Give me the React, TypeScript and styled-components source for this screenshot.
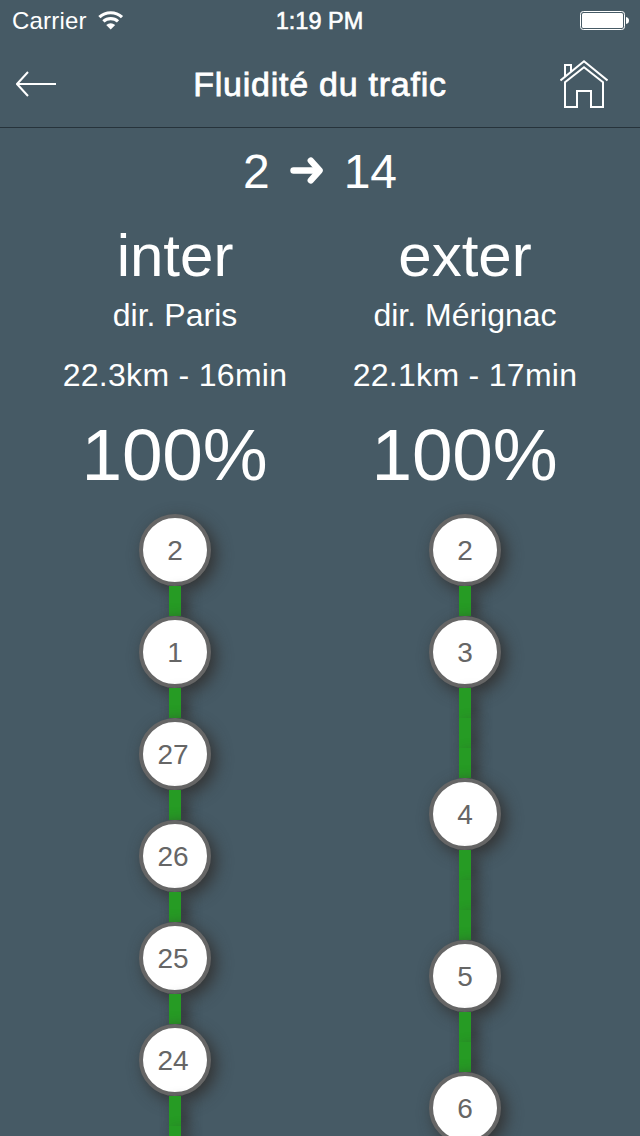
import React from "react";
import styled, { createGlobalStyle } from "styled-components";

const GlobalStyle = createGlobalStyle`
  * { box-sizing: border-box; }
  body { margin: 0; background: #465a65; }
`;

const Screen = styled.div`
  width: 640px;
  height: 1136px;
  overflow: hidden;
  display: flex;
  flex-direction: column;
  background: #465a65;
  color: #fff;
  font-family: "Liberation Sans", Arial, sans-serif;
`;

const StatusBar = styled.div`
  flex: none;
  height: 40px;
  padding: 1px 11px 0 12px;
  display: grid;
  grid-template-columns: 1fr auto 1fr;
  align-items: center;
  font-size: 24px;
  line-height: 39px;
`;

const Carrier = styled.div`
  display: flex;
  align-items: center;
  gap: 11px;
  letter-spacing: 0.2px;
`;

const Clock = styled.div`
  font-size: 23.5px;
  line-height: 37px;
  padding: 2px 2px 0 0;
  -webkit-text-stroke: 0.6px #fff;
`;

const Battery = styled.svg`
  justify-self: end;
`;

const NavBar = styled.header`
  flex: none;
  height: 88px;
  padding: 0 16px;
  display: grid;
  grid-template-columns: 1fr auto 1fr;
  align-items: center;
  border-bottom: 1px solid #26333b;
`;

const Title = styled.h1`
  margin: 0;
  font-size: 34px;
  line-height: 40px;
  font-weight: 400;
  letter-spacing: 0.75px;
  -webkit-text-stroke: 0.8px #fff;
`;

const HomeIcon = styled.svg`
  justify-self: end;
  margin-right: 16px;
`;

const Route = styled.div`
  flex: none;
  height: 86px;
  display: flex;
  align-items: center;
  justify-content: center;
  gap: 20px;
  font-size: 48px;
  line-height: 84px;
`;

const Exit = styled.span`
  padding-top: 2px;
`;

const Columns = styled.main`
  flex: 1;
  min-height: 0;
  padding: 0 30px;
  display: grid;
  grid-template-columns: 1fr 1fr;
`;

const Column = styled.section`
  display: flex;
  flex-direction: column;
  align-items: center;
`;

const Line = styled.div<{ $size: number; $height: number; $spacing?: number }>`
  flex: none;
  white-space: nowrap;
  font-size: ${(p) => p.$size}px;
  height: ${(p) => p.$height}px;
  line-height: ${(p) => p.$height}px;
  letter-spacing: ${(p) => p.$spacing ?? 0}px;
`;

const Fluidity = styled(Line)`
  padding-right: 1px;
`;

const Stops = styled.div`
  display: flex;
  flex-direction: column;
  align-items: center;
  padding-top: 22px;
`;

const Stop = styled.div<{ $wide: boolean }>`
  flex: none;
  width: 72px;
  height: 72px;
  border: 4px solid #666;
  border-radius: 50%;
  background: #fff;
  color: #666;
  box-shadow: 5px 5px 16px #333;
  font-size: 28px;
  line-height: 65px;
  text-align: center;
  padding-right: ${(p) => (p.$wide ? 4 : 0)}px;
`;

const Segment = styled.div`
  flex: none;
  width: 12px;
  height: 30px;
  background: #269b24;
  box-shadow: 6px 6px 14px #333;
`;

type StopData = { exit: number; segments: number };
type Direction = { name: string; dir: string; info: string; fluidity: string; stops: StopData[] };

const directions: Direction[] = [
  {
    name: "inter",
    dir: "dir. Paris",
    info: "22.3km - 16min",
    fluidity: "100%",
    stops: [
      { exit: 2, segments: 1 },
      { exit: 1, segments: 1 },
      { exit: 27, segments: 1 },
      { exit: 26, segments: 1 },
      { exit: 25, segments: 1 },
      { exit: 24, segments: 2 },
    ],
  },
  {
    name: "exter",
    dir: "dir. Mérignac",
    info: "22.1km - 17min",
    fluidity: "100%",
    stops: [
      { exit: 2, segments: 1 },
      { exit: 3, segments: 3 },
      { exit: 4, segments: 3 },
      { exit: 5, segments: 2 },
      { exit: 6, segments: 1 },
    ],
  },
];

export default function App() {
  return (
    <Screen>
      <GlobalStyle />
      <StatusBar>
        <Carrier>
          <span>Carrier</span>
          <svg width="26" height="20" viewBox="0 0 26 20" fill="none" stroke="#fff" strokeWidth="3.2">
            <path d="M1.4 6.2 A16.6 16.6 0 0 1 24 6.2" />
            <path d="M5.4 10.4 A10.8 10.8 0 0 1 20 10.4" />
            <path d="M8.2 14 Q12.7 10.3 17.2 14 L12.7 18.6 Z" fill="#fff" stroke="none" />
          </svg>
        </Carrier>
        <Clock>1:19 PM</Clock>
        <Battery width="49" height="20" viewBox="0 0 49 20">
          <rect x="0.5" y="0.5" width="44" height="18" rx="2.8" fill="none" stroke="#fff" />
          <rect x="2" y="2" width="41" height="15" rx="1.5" fill="#fff" />
          <path d="M46 6 Q49 6.5 49 9.5 Q49 12.5 46 13 Z" fill="#fff" />
        </Battery>
      </StatusBar>
      <NavBar>
        <svg width="40" height="26" viewBox="0 0 40 26" fill="none" stroke="#fff" strokeWidth="2">
          <path d="M40 13 H1 M12 1 L1 13 L12 25" />
        </svg>
        <Title>Fluidité du trafic</Title>
        <HomeIcon width="48" height="48" viewBox="0 0 48 48" fill="none" stroke="#fff" strokeWidth="2">
          <path d="M0.5 20.5 L24 1.3 L47.5 20.5" />
          <path d="M5 16.5 V5 H11 V11.5" />
          <path d="M5 47 V22.3 L24 7.3 L43 22.3 V47 H31 V31 H17 V47 Z" />
        </HomeIcon>
      </NavBar>
      <Route>
        <Exit>2</Exit>
        <svg width="34" height="30" viewBox="0 0 34 30" fill="none" stroke="#fff" strokeWidth="6.4" strokeLinecap="round" strokeLinejoin="round">
          <path d="M3.5 14.5 H27" />
          <path d="M20.8 4.7 L29.6 14.5 L20.8 24.3" />
        </svg>
        <Exit>14</Exit>
      </Route>
      <Columns>
        {directions.map((d) => (
          <Column key={d.name}>
            <Line $size={60} $height={84}>{d.name}</Line>
            <Line $size={32} $height={34}>{d.dir}</Line>
            <Line $size={32} $height={86} $spacing={0.3}>{d.info}</Line>
            <Fluidity $size={73} $height={74} $spacing={-0.2}>{d.fluidity}</Fluidity>
            <Stops>
              {d.stops.map((s) => (
                <React.Fragment key={s.exit}>
                  <Stop $wide={s.exit > 9}>{s.exit}</Stop>
                  {Array.from({ length: s.segments }, (_, i) => (
                    <Segment key={i} />
                  ))}
                </React.Fragment>
              ))}
            </Stops>
          </Column>
        ))}
      </Columns>
    </Screen>
  );
}
